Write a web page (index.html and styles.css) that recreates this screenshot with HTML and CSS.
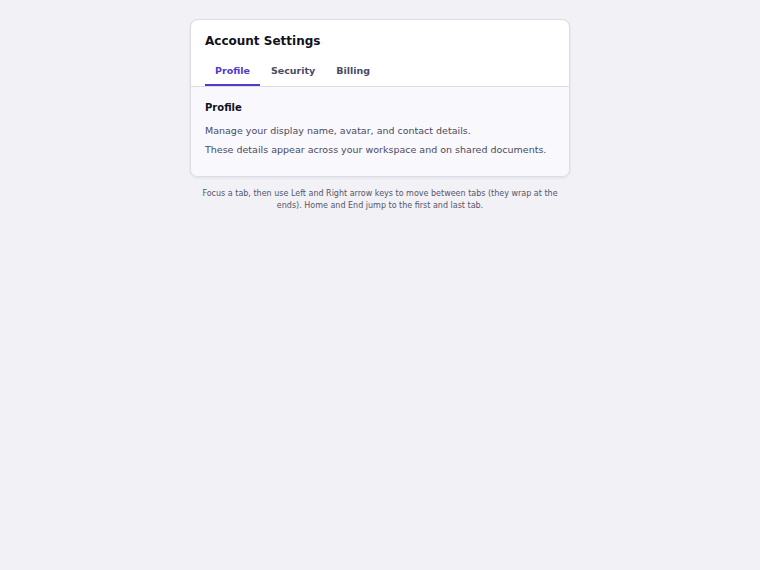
FILE: index.html
```html
<!DOCTYPE html>
<html lang="en">
<head>
<meta charset="utf-8">
<title>Account Settings</title>
<link rel="stylesheet" href="styles.css">
</head>
<body>
<main class="wrap">
  <section class="card">
    <header class="card-head">
      <h1 class="title">Account Settings</h1>
      <div class="tabs" role="tablist">
        <button class="tab active" role="tab" aria-selected="true">Profile</button>
        <button class="tab" role="tab" aria-selected="false">Security</button>
        <button class="tab" role="tab" aria-selected="false">Billing</button>
      </div>
    </header>
    <div class="panel" role="tabpanel">
      <h2 class="panel-title">Profile</h2>
      <p class="panel-text">Manage your display name, avatar, and contact details.</p>
      <p class="panel-text">These details appear across your workspace and on shared documents.</p>
    </div>
  </section>
  <p class="hint">Focus a tab, then use Left and Right arrow keys to move between tabs (they wrap at the ends). Home and End jump to the first and last tab.</p>
</main>
</body>
</html>
```
FILE: styles.css
```css
* { box-sizing: border-box; }
html, body { margin: 0; padding: 0; }
body {
  background: #f1f1f6;
  font-family: "DejaVu Sans", sans-serif;
  color: #15151f;
}
.wrap {
  width: 380px;
  margin: 0 auto;
  padding-top: 19px;
}
.card {
  background: #ffffff;
  border: 1px solid #dcdce6;
  border-radius: 8px;
  box-shadow: 0 1px 3px rgba(30, 30, 60, 0.08);
  overflow: hidden;
}
.card-head {
  padding: 13px 14px 0;
  border-bottom: 1px solid #dcdce6;
}
.title {
  margin: 0 0 7px;
  font-size: 12px;
  font-weight: bold;
  line-height: 16px;
  color: #12121c;
}
.tabs {
  display: flex;
  gap: 1px;
}
.tab {
  font-family: "DejaVu Sans", sans-serif;
  font-size: 9.5px;
  font-weight: bold;
  color: #4b4b63;
  background: none;
  border: none;
  border-bottom: 2px solid transparent;
  padding: 8px 10px 6px;
  line-height: 14px;
  margin: 0;
  cursor: pointer;
}
.tab.active {
  color: #4f3bc6;
  border-bottom-color: #4f3bc6;
}
.panel {
  background: #f8f8fd;
  padding: 14px 14px 17px;
}
.panel-title {
  margin: 0 0 6px;
  font-size: 10px;
  font-weight: bold;
  line-height: 14px;
  color: #12121c;
}
.panel-text {
  margin: 0;
  font-size: 9.5px;
  line-height: 19px;
  color: #4b4b5e;
}
.hint {
  margin: 11px 0 0;
  text-align: center;
  font-size: 8px;
  line-height: 12px;
  color: #56566a;
}
```
